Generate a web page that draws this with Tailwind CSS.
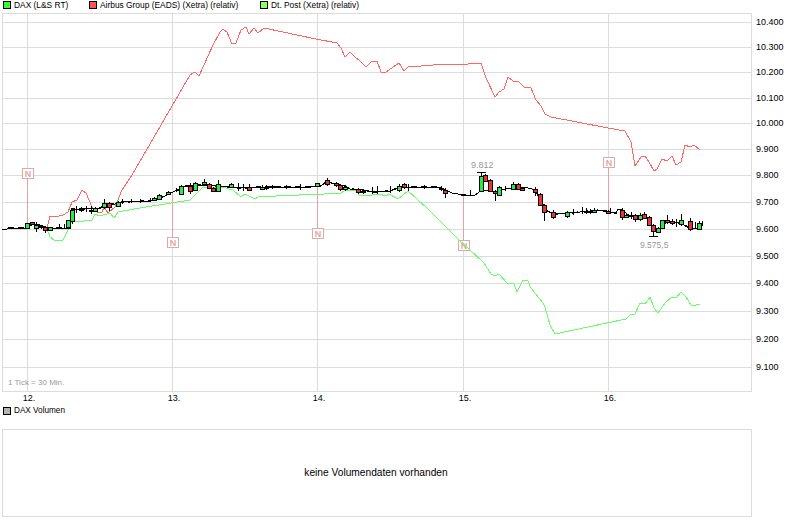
<!DOCTYPE html>
<html lang="de">
<head>
    <meta charset="UTF-8">
    <title>DAX Chart</title>
    <script src="https://cdn.jsdelivr.net/npm/@tailwindcss/browser@4"></script>
</head>
<body class="overflow-hidden bg-white font-['Liberation_Sans',sans-serif] text-[9px] text-black">
    <div class="w-[792px] h-[526px]">
        <!-- legend -->
        <div class="flex items-center h-[13px] pb-[3px] leading-none whitespace-nowrap text-[8.4px]">
            <span class="shrink-0 w-[8px] h-[8px] ml-[3px] border border-black bg-[#33ff33]"></span>
            <span class="shrink-0 ml-[3px] w-[75px]">DAX (L&amp;S RT)</span>
            <span class="shrink-0 w-[8px] h-[8px] border border-black bg-[#ff5555]"></span>
            <span class="shrink-0 ml-[3px] w-[160px]">Airbus Group (EADS) (Xetra) (relativ)</span>
            <span class="shrink-0 w-[8px] h-[8px] border border-black bg-[#88ff66]"></span>
            <span class="shrink-0 ml-[3px]">Dt. Post (Xetra) (relativ)</span>
        </div>

        <!-- main chart -->
        <svg class="block" width="792" height="392" viewBox="0 13 792 392">
            <g id="grid" stroke="#dcdcdc" fill="none" shape-rendering="crispEdges"></g>
            <g id="news" shape-rendering="crispEdges"></g>
            <polyline fill="none" stroke="#ff6666" shape-rendering="crispEdges" points="47,228 50,216 55,217 63,215 68,212 72,202 77,200 82,190 86,193 92,207 97,212 102,212 104,207 108,213 115,207 122,190 132,175 190,75 195,72 199,76 213,45 220,32 223,29 227,32 232,44 236,43 241,30 246,27 249,34 254,28 258,33 264,28 316,39 337,43 341,48 345,57 350,52 356,58 359,60 366,67 372,61 377,61 381,72 386,72 399,63 404,71 408,67 421,66 446,64 468,64 481,63 486,78 495,97 499,92 504,89 508,77 513,81 518,81 524,87 531,88 536,100 541,106 545,114 551,117 608,128 625,131 631,142 635,166 641,157 645,156 649,162 654,171 657,169 662,159 667,161 672,156 676,165 681,162 685,145 690,147 694,145 700,150"/>
            <polyline fill="none" stroke="#66ff66" shape-rendering="crispEdges" points="47,229 50,237 54,240 63,240 69,228 72,221 76,222 92,220 95,214 100,216 110,213 114,218 118,212 140,208 190,200 197,193 202,188 208,187 222,187 233,190 241,197 245,194 255,199 260,196 276,196 299,195 324,194 341,193 346,190 356,190 359,195 366,196 379,194 386,196 389,194 398,199 408,191 427,208 459,240 469,249 484,263 491,274 495,276 499,274 507,283 514,284 517,292 523,280 528,281 531,288 543,303 545,307 550,325 555,334 626,319 631,314 635,314 640,303 645,304 650,297 654,308 658,313 665,303 672,297 676,298 681,292 686,297 691,305 696,305 700,304"/>
            <polyline fill="none" stroke="#000" shape-rendering="crispEdges" points="2,229 7,229 8,228 25,228 30,225 35,224 42,226 47,228 52,228 57,228 70,228 72,209 85,209 100,208 105,205 115,204 122,202 150,201 155,199 165,196 170,193 178,190 185,186 200,185 220,186 240,188 264,187 310,187 320,186 327,182 345,186 350,189 362,190 375,192 390,191 400,187 440,187 445,190 452,193 464,195 475,195 482,190 495,192 505,189 525,187 535,190 546,210 553,214 570,213 590,211 600,210 610,212 616,213 618,209 622,210 630,216 644,216 649,218 653,228 662,228 667,221 680,223 690,228 700,229"/>
            <polyline fill="none" stroke="#000" stroke-width="1.6" stroke-dasharray="6 4" shape-rendering="crispEdges" points="8,228 25,228 30,225 35,224 42,226 47,228 52,228 57,228 70,228 72,209 85,209 100,208 105,205 115,204 122,202 150,201 155,199 165,196 170,193 178,190 185,186 200,185 220,186 240,188 264,187 310,187 320,186 327,182 345,186 350,189 362,190 375,192 390,191 400,187 440,187"/>
            <polyline fill="none" stroke="#000" stroke-width="1.6" stroke-dasharray="6 4" shape-rendering="crispEdges" points="535,190 546,210 553,214 570,213 590,211 600,210 610,212 616,213 618,209 622,210 630,216 644,216 649,218 653,228 662,228 667,221 680,223 690,228 700,229"/>
            <g id="candles" shape-rendering="crispEdges"></g>
            <g id="labels" fill="#000"></g>
            <g fill="#999">
                <text x="471" y="168">9.812</text>
                <text x="640" y="248" font-size="8.5">9.575,5</text>
                <text x="8" y="385" font-size="8">1 Tick = 30 Min.</text>
            </g>
        </svg>

        <!-- volume -->
        <div class="flex items-center h-[12px] leading-none whitespace-nowrap text-[8.2px]">
            <span class="shrink-0 w-[8px] h-[8px] ml-[3px] border border-black bg-[#b4b4b4]"></span>
            <span class="ml-[3px]">DAX Volumen</span>
        </div>
        <div class="flex items-center justify-center w-[750px] h-[88px] ml-[2px] mt-[12px] pr-[2px] border border-[#dcdcdc] text-[10.2px]">
            keine Volumendaten vorhanden
        </div>
    </div>

    <script>
        const hlines = [22, 47, 72, 98, 123, 149, 175, 202, 229, 256, 283, 311, 339, 367]
        const prices = ['10.400', '10.300', '10.200', '10.100', '10.000', '9.900', '9.800', '9.700', '9.600', '9.500', '9.400', '9.300', '9.200', '9.100']
        const vlines = [27, 172, 317, 463, 608]
        const days = ['12.', '13.', '14.', '15.', '16.']

        let grid = '<rect x="2.5" y="13.5" width="749" height="378"/>'
        hlines.forEach(y => grid += `<line x1="2" x2="751" y1="${y + .5}" y2="${y + .5}"/>`)
        vlines.forEach(x => grid += `<line x1="${x + .5}" x2="${x + .5}" y1="13" y2="391"/>`)
        document.getElementById('grid').innerHTML = grid

        let labels = ''
        hlines.forEach((y, i) => labels += `<text x="756" y="${y + 3}">${prices[i]}</text>`)
        vlines.forEach((x, i) => labels += `<text x="${x + 2}" y="401" text-anchor="middle">${days[i]}</text>`)
        document.getElementById('labels').innerHTML = labels

        // news markers: x, box top, stem top, stem bottom
        const news = [[27, 168, 179, 224], [172, 237, 192, 237], [317, 228, 187, 228], [463, 240, 195, 240], [608, 157, 168, 211]]
        let n = ''
        news.forEach(([x, box, a, b]) => {
            n += `<line x1="${x + .5}" x2="${x + .5}" y1="${a}" y2="${b}" stroke="#e8a0a0"/>`
            n += `<rect x="${x - 5 + .5}" y="${box + .5}" width="11" height="10" fill="#fff" stroke="#e4a8a8" stroke-width="1"/>`
            n += `<text x="${x + 1}" y="${box + 9}" text-anchor="middle" font-size="9" font-weight="bold" fill="#e0a8a8">N</text>`
        })
        document.getElementById('news').innerHTML = n

        // candles: x, body top, body bottom, wick top, wick bottom, colour
        const g = '#22ee44', r = '#ee3333'
        const candles = [
            [27, 223, 228, 223, 228, g], [32, 222, 224, 222, 224, r], [36, 225, 228, 222, 232, g], [41, 226, 227, 225, 229, r],
            [45, 227, 230, 226, 233, r], [50, 227, 230, 227, 231, g], [68, 220, 227, 220, 227, g], [72, 210, 221, 209, 224, g],
            [81, 209, 210, 207, 212, r], [91, 210, 211, 206, 214, r], [95, 208, 211, 207, 212, g], [104, 203, 207, 199, 209, g],
            [109, 203, 207, 202, 211, r], [118, 202, 206, 201, 207, g], [154, 198, 200, 197, 201, g], [159, 195, 199, 194, 200, g],
            [168, 192, 194, 191, 195, g], [181, 186, 194, 185, 195, g], [190, 186, 191, 183, 194, r], [195, 183, 190, 182, 191, g],
            [204, 182, 184, 179, 185, g], [209, 184, 188, 183, 189, r], [213, 188, 191, 187, 192, r], [218, 184, 191, 180, 192, g],
            [231, 184, 187, 183, 188, g], [249, 187, 190, 184, 191, r], [262, 187, 189, 185, 190, g], [266, 187, 188, 185, 190, g],
            [272, 186, 187, 185, 189, g], [286, 186, 187, 185, 189, r], [317, 183, 186, 183, 187, g], [327, 180, 184, 178, 186, r],
            [336, 183, 185, 182, 187, r], [340, 185, 189, 184, 191, r], [345, 187, 189, 186, 191, g], [358, 189, 192, 188, 194, r],
            [363, 191, 192, 190, 194, r], [399, 186, 190, 184, 192, g], [404, 184, 187, 183, 189, r], [441, 188, 189, 186, 191, r],
            [445, 190, 193, 188, 198, r], [463, 194, 195, 194, 196, r], [481, 176, 191, 172, 192, g], [485, 175, 181, 174, 182, r],
            [490, 180, 191, 179, 192, r], [495, 191, 193, 190, 201, r], [499, 187, 195, 186, 196, g], [513, 184, 189, 182, 190, g],
            [518, 184, 189, 183, 190, r], [522, 188, 190, 187, 191, r], [535, 189, 192, 187, 196, r], [540, 194, 205, 193, 206, r],
            [544, 205, 212, 204, 221, r], [553, 212, 217, 210, 219, r], [567, 212, 216, 211, 218, g], [586, 211, 212, 208, 214, g],
            [590, 211, 212, 209, 214, r], [594, 210, 212, 208, 213, g], [608, 211, 213, 210, 214, r], [622, 210, 217, 208, 220, r],
            [626, 215, 217, 214, 218, g], [635, 215, 219, 214, 222, r], [640, 215, 219, 213, 221, g], [644, 214, 218, 212, 219, r],
            [649, 217, 225, 216, 226, r], [653, 225, 231, 224, 236, r], [658, 228, 232, 227, 233, g], [662, 220, 228, 220, 229, g],
            [667, 220, 222, 215, 224, r], [672, 221, 223, 219, 225, r], [681, 220, 224, 214, 226, g], [690, 221, 229, 218, 231, r],
            [699, 223, 229, 221, 229, g]
        ]
        const wicks = [[59, 224, 229], [64, 224, 229], [76, 206, 213], [86, 206, 212], [122, 199, 204], [131, 199, 203], [140, 199, 203], [150, 198, 202], [176, 188, 192], [238, 183, 191], [243, 184, 191], [300, 184, 190], [372, 187, 194], [377, 186, 194], [390, 186, 193], [408, 184, 191], [424, 185, 189], [470, 190, 196], [505, 186, 191], [573, 209, 215], [582, 207, 214], [610, 208, 214], [631, 212, 219], [676, 219, 227], [695, 222, 228], [702, 221, 226]]
        let c = ''
        wicks.forEach(([x, a, b]) => c += `<line x1="${x + .5}" x2="${x + .5}" y1="${a}" y2="${b}" stroke="#000"/>`)
        candles.forEach(([x, t, b, wt, wb, col]) => {
            c += `<line x1="${x + .5}" x2="${x + .5}" y1="${wt}" y2="${wb}" stroke="#000"/>`
            c += `<rect x="${x - 2 + .5}" y="${t + .5}" width="4" height="${b - t}" fill="${col}" stroke="#000"/>`
        })
        // high / low caps
        c += '<line x1="477" x2="486" y1="172.5" y2="172.5" stroke="#000"/>'
        c += '<line x1="649" x2="658" y1="236.5" y2="236.5" stroke="#000"/>'
        document.getElementById('candles').innerHTML = c
    </script>
</body>
</html>
